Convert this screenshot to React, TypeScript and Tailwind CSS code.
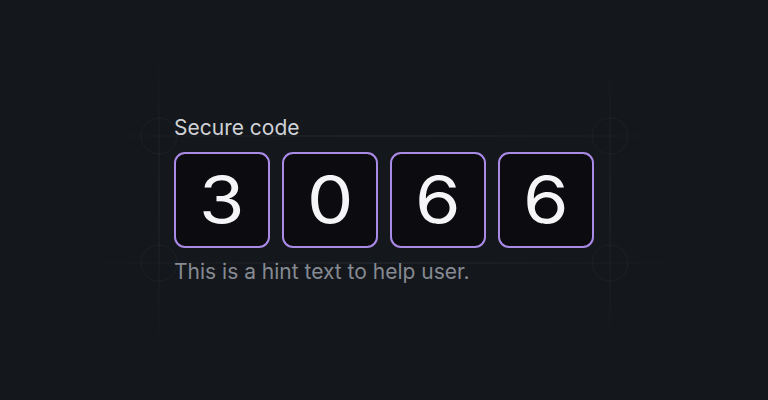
const digits = ["3", "0", "6", "6"];

// faint construction lines behind the input group
function Guides() {
  return (
    <svg className="pointer-events-none absolute inset-0" width="768" height="400" viewBox="0 0 768 400">
      <defs>
        <linearGradient id="fadeX" x1="0" x2="1" y1="0" y2="0">
          <stop offset="0" stopColor="#fff" stopOpacity="0" />
          <stop offset="0.5" stopColor="#fff" stopOpacity="0.09" />
          <stop offset="1" stopColor="#fff" stopOpacity="0" />
        </linearGradient>
        <linearGradient id="fadeY" x1="0" x2="0" y1="0" y2="1">
          <stop offset="0" stopColor="#fff" stopOpacity="0" />
          <stop offset="0.5" stopColor="#fff" stopOpacity="0.07" />
          <stop offset="1" stopColor="#fff" stopOpacity="0" />
        </linearGradient>
      </defs>
      <rect x="158.5" y="52" width="1" height="300" fill="url(#fadeY)" />
      <rect x="609.5" y="52" width="1" height="300" fill="url(#fadeY)" />
      <rect x="80" y="135.5" width="610" height="1" fill="url(#fadeX)" />
      <rect x="80" y="262.5" width="610" height="1" fill="url(#fadeX)" />
      {[
        [159, 136],
        [610, 136],
        [159, 263],
        [610, 263],
      ].map(([cx, cy], i) => (
        <circle key={i} cx={cx} cy={cy} r="18" fill="none" stroke="#fff" strokeOpacity="0.035" />
      ))}
    </svg>
  );
}

export default function App() {
  return (
    <div className="relative flex h-[400px] w-[768px] items-center justify-center overflow-hidden bg-[#14171c] font-['Inter',sans-serif]">
      <Guides />
      <div className="relative flex flex-col gap-3">
        <label className="text-[21px] leading-[24px] text-[#d0d2d6]">Secure code</label>
        <div className="flex gap-3">
          {digits.map((d, i) => (
            <div
              key={i}
              className="flex h-[96px] w-[96px] items-center justify-center rounded-[11px] border-2 border-[#a98be6] bg-[#0c0c10] text-[64px] leading-none text-[#f5f5f7]"
            >
              <span className="inline-block scale-x-[1.15]">{d}</span>
            </div>
          ))}
        </div>
        <p className="text-[21px] leading-[24px] text-[#868a92]">This is a hint text to help user.</p>
      </div>
    </div>
  );
}
